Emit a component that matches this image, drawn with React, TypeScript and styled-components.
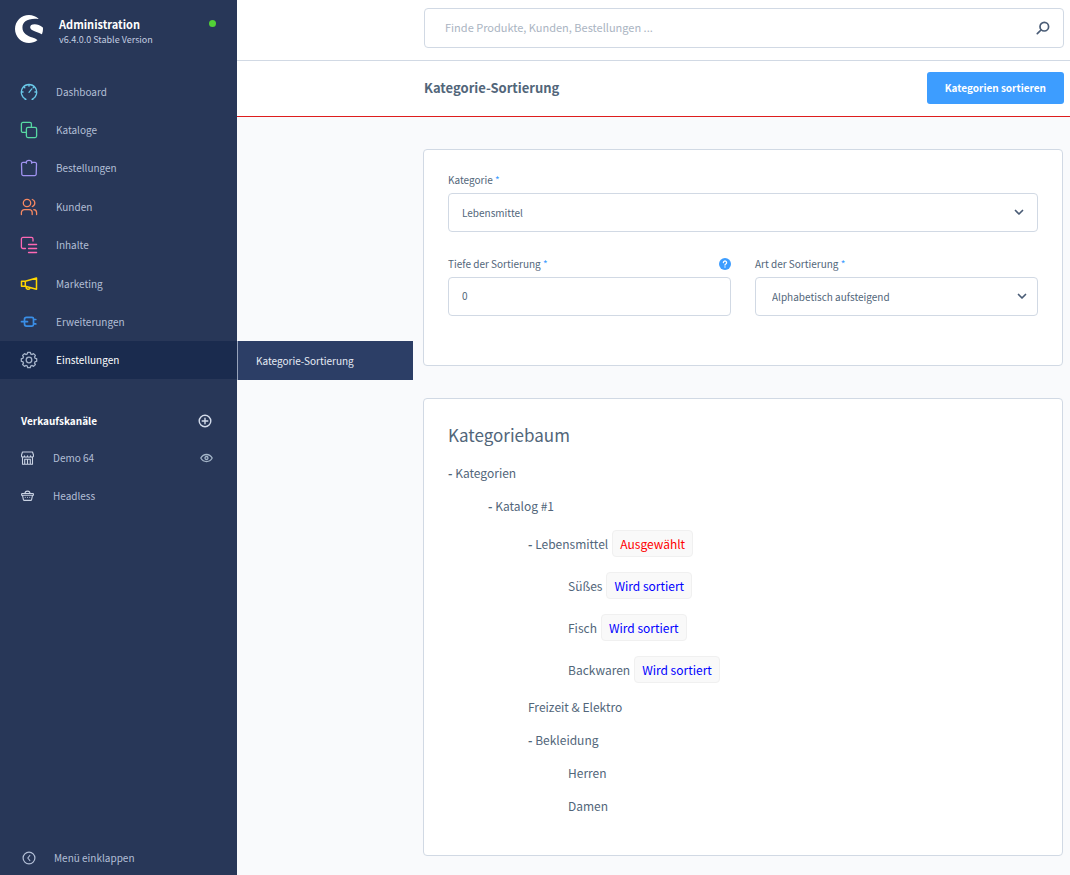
import React from 'react';
import styled, { createGlobalStyle } from 'styled-components';
import { SiShopware } from 'react-icons/si';

const c = {
  sidebar: '#283758',
  sidebarActive: '#1a2b4e',
  flyout: '#2c3e66',
  navText: '#b3bfd6',
  text: '#52667a',
  border: '#d1d9e4',
  page: '#f9fafc',
  blue: '#3d9dff',
};

const GlobalStyle = createGlobalStyle`
  *, *::before, *::after { box-sizing: border-box; }
  body {
    margin: 0;
    background: ${c.page};
    color: ${c.text};
    font-family: "Source Sans Pro", "Noto Sans CJK JP", "Noto Sans", sans-serif;
    font-size: 10px;
    line-height: 18px;
  }
  h1, h2, p, ul { margin: 0; padding: 0; }
  ul { list-style: none; }
  a { color: inherit; text-decoration: none; }
  svg { display: block; flex: none; }
  button, input, select { font: inherit; color: inherit; }
`;

const Layout = styled.div`
  display: flex;
  min-height: 100vh;
`;

const Sidebar = styled.aside`
  display: flex;
  flex-direction: column;
  flex: none;
  width: 237px;
  background: ${c.sidebar};
  color: ${c.navText};
`;

const Brand = styled.header`
  display: flex;
  align-items: flex-start;
  gap: 16px;
  height: 72px;
  padding: 15px 21px 0 15px;
  color: #fff;
`;

const BrandText = styled.div`
  flex: 1;
`;

const BrandName = styled.p`
  font-size: 11px;
  font-weight: 600;
`;

const Version = styled.p`
  font-size: 9px;
  line-height: 14px;
  color: #c3cde0;
`;

const StatusDot = styled.span`
  width: 7px;
  height: 7px;
  margin-top: 5px;
  border-radius: 50%;
  background: #52d136;
`;

const NavList = styled.ul`
  display: grid;
  grid-auto-rows: 1fr;
  height: 307px;
`;

const NavItem = styled.li`
  position: relative;
  display: grid;
`;

const NavLink = styled.a<{ $active?: boolean }>`
  display: flex;
  align-items: center;
  gap: 18px;
  padding: 1px 0 0 20px;
  background: ${(p) => (p.$active ? c.sidebarActive : 'transparent')};
  color: ${(p) => (p.$active ? '#fff' : 'inherit')};
`;

const Flyout = styled.a`
  position: absolute;
  top: 0;
  left: 100%;
  z-index: 1;
  display: flex;
  align-items: center;
  width: 176px;
  height: 39px;
  padding: 2px 0 0 18px;
  border-left: 1px solid #97a3ba;
  background: ${c.flyout};
  color: #e6ebf5;
`;

const SectionHead = styled.div`
  display: flex;
  align-items: center;
  justify-content: space-between;
  height: 38px;
  margin-top: 23px;
  padding: 0 25px 0 21px;
`;

const SectionTitle = styled.h2`
  font-size: 10px;
  font-weight: 700;
  color: #fff;
`;

const IconButton = styled.button`
  display: flex;
  padding: 0;
  border: 0;
  background: none;
  cursor: pointer;
`;

const Channel = styled.li`
  display: flex;
  align-items: center;
  justify-content: space-between;
  height: 38px;
  padding: 0 24px 2px 21px;
`;

const ChannelLink = styled.a`
  display: flex;
  align-items: center;
  gap: 19px;
`;

const Collapse = styled.button`
  display: flex;
  align-items: center;
  gap: 18px;
  height: 36px;
  margin-top: auto;
  padding: 2px 0 0 22px;
  border: 0;
  background: none;
  cursor: pointer;
`;

const Page = styled.div`
  flex: 1;
  min-width: 0;
`;

const TopBar = styled.div`
  padding: 8px 6px 12px 187px;
  border-bottom: 1px solid ${c.border};
  background: #fff;
`;

const SearchBox = styled.form`
  display: flex;
  align-items: center;
  height: 40px;
  padding: 0 13px 0 20px;
  border: 1px solid ${c.border};
  border-radius: 4px;
  color: ${c.text};
`;

const SearchInput = styled.input`
  flex: 1;
  min-width: 0;
  padding: 0 0 2px;
  border: 0;
  outline: 0;
  background: none;
  font-size: 11px;
  &::placeholder { color: #aab4c2; opacity: 1; }
`;

const TitleBar = styled.div`
  display: flex;
  align-items: center;
  justify-content: space-between;
  height: 56px;
  padding: 0 6px 2px 187px;
  border-bottom: 1px solid #de1d1d;
  background: #fff;
`;

const PageTitle = styled.h1`
  font-size: 13px;
  font-weight: 600;
`;

const PrimaryButton = styled.button`
  height: 32px;
  padding: 0 18px;
  border: 0;
  border-radius: 3px;
  background: ${c.blue};
  color: #fff;
  font-weight: 600;
  cursor: pointer;
`;

const Content = styled.main`
  display: flex;
  flex-direction: column;
  gap: 32px;
  padding: 32px 7px 19px 186px;
`;

const Card = styled.section`
  padding: 22px 24px 49px;
  border: 1px solid ${c.border};
  border-radius: 4px;
  background: #fff;
`;

const TreeCard = styled(Card)`
  padding-bottom: 40px;
`;

const FieldGrid = styled.div`
  display: grid;
  grid-template-columns: 1fr 1fr;
  gap: 24px;
`;

const Field = styled.div<{ $wide?: boolean }>`
  grid-column: ${(p) => (p.$wide ? '1 / -1' : 'auto')};
`;

const FieldHead = styled.div`
  display: flex;
  align-items: center;
  justify-content: space-between;
  height: 21px;
  padding-bottom: 5px;
`;

const Required = styled.span`
  color: ${c.blue};
`;

const Control = styled.div`
  position: relative;
`;

const TextInput = styled.input`
  display: block;
  width: 100%;
  height: 39px;
  padding: 0 13px 2px;
  border: 1px solid ${c.border};
  border-radius: 4px;
  background: #fff;
`;

const Select = styled.select<{ $inset: number }>`
  display: block;
  width: 100%;
  height: 39px;
  padding: 0 36px 0 ${(p) => p.$inset}px;
  border: 1px solid ${c.border};
  border-radius: 4px;
  background: #fff;
  appearance: none;
`;

const Chevron = styled.span<{ $right: number }>`
  position: absolute;
  top: 15px;
  right: ${(p) => p.$right}px;
  pointer-events: none;
`;

const TreeTitle = styled.h2`
  margin-bottom: 15px;
  font-size: 17px;
  font-weight: 400;
  line-height: 28px;
`;

const TreeList = styled.ul<{ $nested?: boolean }>`
  display: flex;
  flex-direction: column;
  gap: 15px;
  margin-top: ${(p) => (p.$nested ? '15px' : '0')};
  padding-left: ${(p) => (p.$nested ? '40px' : '0')};
  font-size: 12px;
`;

const TreeRow = styled.div`
  display: flex;
  align-items: center;
  gap: 4px;
`;

const Dash = styled.b`
  font-weight: 700;
`;

const Badge = styled.span<{ $tone: string }>`
  padding: 4px 7px;
  border: 1px solid #f0f0f0;
  border-radius: 4px;
  background: #f9f9f9;
  color: ${(p) => p.$tone};
  line-height: 17px;
`;

type IconProps = { color?: string; w?: number; h?: number; sw?: number; children: React.ReactNode };

const Icon = ({ color = 'currentColor', w = 18, h = 18, sw = 1.3, children }: IconProps) => (
  <svg width={w} height={h} viewBox={`0 0 ${w} ${h}`} fill="none" stroke={color} strokeWidth={sw} strokeLinecap="round" strokeLinejoin="round" aria-hidden="true">
    {children}
  </svg>
);

const gear = (() => {
  const pts: string[] = [];
  for (let i = 0; i < 8; i++) {
    [[-15, 6.3], [-10, 7.8], [10, 7.8], [15, 6.3]].forEach(([d, r]) => {
      const a = ((i * 45 + d) * Math.PI) / 180;
      pts.push(`${(9 + r * Math.cos(a)).toFixed(2)} ${(9 + r * Math.sin(a)).toFixed(2)}`);
    });
  }
  return `M${pts.join('L')}Z`;
})();

const nav = [
  { label: 'Dashboard', icon: <Icon color="#6ac8e8"><path d="M6 16.3A7.700 7.700 0 1 1 12 16.300M6 16.300H5M12 16.300h1M9 1.500v1.700M1.400 9h1.700M16.600 9h-1.700M3.600 3.600l1.200 1.200M14.400 3.600l-1.200 1.200M9 9.300l2.800-3.400" /></Icon> },
  { label: 'Kataloge', icon: <Icon color="#57d9a3"><path d="M6.400 11.400H2.900a1.500 1.500 0 0 1-1.500-1.500v-7a1.500 1.500 0 0 1 1.500-1.500h7a1.500 1.500 0 0 1 1.500 1.500v3.500" /><rect x="6.400" y="6.400" width="10.200" height="10.200" rx="1.500" /></Icon> },
  { label: 'Bestellungen', icon: <Icon color="#a092f0"><path d="M6 3.400H3a1.500 1.500 0 0 0-1.500 1.600l.3 10A1.500 1.500 0 0 0 3.300 16.600h11.400a1.500 1.500 0 0 0 1.500-1.600l.3-10A1.500 1.500 0 0 0 15 3.400h-3M6.300 4.300V3.400a2.700 2 0 0 1 5.400 0v.9" /></Icon> },
  { label: 'Kunden', icon: <Icon color="#f88962"><circle cx="7" cy="5" r="3.700" /><path d="M1.400 16.600v-2a3 3 0 0 1 3-3h4.800a3 3 0 0 1 3 3v2M12.300 1.500a3.700 3.700 0 0 1 0 7M13.800 11.700a3 3 0 0 1 2.800 3v1.900" /></Icon> },
  { label: 'Inhalte', icon: <Icon color="#ff68b4"><path d="M5.500 12.500H2.900a1.500 1.500 0 0 1-1.500-1.500V2.900a1.500 1.500 0 0 1 1.500-1.500h8.600a1.500 1.500 0 0 1 1.500 1.500v2.200M8.500 8.500h8.100M8.500 12.500h8.100M8.500 16.500h8.100" /></Icon> },
  { label: 'Marketing', icon: <Icon color="#ffd700" sw={1.500}><path d="M1.500 6.200h3.800L16.500 3v11.300L5.300 11.200H1.500zM5.300 6.200v5M6 11.500v.6a2.100 2.100 0 0 0 4.100.7" /></Icon> },
  { label: 'Erweiterungen', icon: <Icon color="#3a8ee6" sw={1.700}><path d="M1.500 8.700h6M6.500 4.300h5.500a1.500 1.500 0 0 1 1.500 1.500v5.800a1.500 1.500 0 0 1-1.500 1.500H6.500a2 2 0 0 1-2-2V6.300a2 2 0 0 1 2-2zM13.500 6.500h2.300M13.500 10.900h2.300" /></Icon> },
  { label: 'Einstellungen', icon: <Icon color="#a4b2c8"><path d={gear} /><circle cx="9" cy="9" r="2.800" /></Icon>, active: true },
];

const ChevronIcon = () => <Icon w={10} h={8} sw={1.700} color="#4a5c76"><path d="M1.500 2.500L5 6 8.500 2.500" /></Icon>;

type Node = { name: string; badge?: 'selected' | 'sorted'; children?: Node[] };

const tree: Node[] = [
  { name: 'Kategorien', children: [
    { name: 'Katalog #1', children: [
      { name: 'Lebensmittel', badge: 'selected', children: [
        { name: 'Süßes', badge: 'sorted' },
        { name: 'Fisch', badge: 'sorted' },
        { name: 'Backwaren', badge: 'sorted' },
      ] },
      { name: 'Freizeit & Elektro' },
      { name: 'Bekleidung', children: [{ name: 'Herren' }, { name: 'Damen' }] },
    ] },
  ] },
];

const Tree = ({ nodes, nested }: { nodes: Node[]; nested?: boolean }) => (
  <TreeList $nested={nested}>
    {nodes.map((n) => (
      <li key={n.name}>
        <TreeRow>
          <span>{n.children && <Dash>- </Dash>}{n.name}</span>
          {n.badge === 'selected' && <Badge $tone="#f00">Ausgewählt</Badge>}
          {n.badge === 'sorted' && <Badge $tone="#00f">Wird sortiert</Badge>}
        </TreeRow>
        {n.children && <Tree nodes={n.children} nested />}
      </li>
    ))}
  </TreeList>
);

export default function App() {
  return (
    <>
      <GlobalStyle />
      <Layout>
        <Sidebar>
          <Brand>
            <SiShopware size={28} aria-hidden="true" />
            <BrandText>
              <BrandName>Administration</BrandName>
              <Version>v6.4.0.0 Stable Version</Version>
            </BrandText>
            <StatusDot />
          </Brand>
          <nav>
            <NavList>
              {nav.map((n) => (
                <NavItem key={n.label}>
                  <NavLink href="#" $active={n.active}>{n.icon}{n.label}</NavLink>
                  {n.active && <Flyout href="#">Kategorie-Sortierung</Flyout>}
                </NavItem>
              ))}
            </NavList>
          </nav>
          <SectionHead>
            <SectionTitle>Verkaufskanäle</SectionTitle>
            <IconButton type="button" aria-label="Verkaufskanal hinzufügen">
              <Icon w={14} h={14} sw={1.400} color="#d3dbea"><circle cx="7" cy="7" r="5.800" /><path d="M7 4.200v5.600M4.200 7h5.600" /></Icon>
            </IconButton>
          </SectionHead>
          <ul>
            <Channel>
              <ChannelLink href="#">
                <Icon w={13} h={14} sw={1.100} color="#c9d2e3"><path d="M1.500 1h10l1 3v.5a1.500 1.500 0 0 1-3 .3 1.500 1.500 0 0 1-3 0 1.500 1.500 0 0 1-3 0 1.500 1.500 0 0 1-3-.3V4zM1.500 6.500v6.700h10V6.500M3.700 13V8.300h5.600V13M6.500 8.300V13" /></Icon>
                Demo 64
              </ChannelLink>
              <IconButton type="button" aria-label="Verkaufskanal ansehen">
                <Icon w={13} h={10} sw={1.300} color="#a4b5c8"><path d="M.800 5C3.500.300 9.500.300 12.200 5 9.500 9.700 3.500 9.700.800 5z" /><circle cx="6.500" cy="5" r="1.500" /></Icon>
              </IconButton>
            </Channel>
            <Channel>
              <ChannelLink href="#">
                <Icon w={13} h={12} sw={1.100} color="#c9d2e3"><path d="M1.200 3.500h10.600a.6.600 0 0 1 .6.600v1.200H.600V4.100a.6.600 0 0 1 .6-.6zM1.500 5.300l.9 4.300a1 1 0 0 0 1 .8h6.200a1 1 0 0 0 1-.8l.9-4.300M4 3.500a2.500 2.400 0 0 1 5 0M4.300 7.200v.1M6.500 7.200v.1M8.700 7.200v.1" /></Icon>
                Headless
              </ChannelLink>
            </Channel>
          </ul>
          <Collapse type="button">
            <Icon w={14} h={14} sw={1.200}><circle cx="7" cy="7" r="5.900" /><path d="M7.800 4.500L5.800 7l2 2.500" /></Icon>
            Menü einklappen
          </Collapse>
        </Sidebar>
        <Page>
          <TopBar>
            <SearchBox role="search">
              <SearchInput type="search" aria-label="Suche" placeholder="Finde Produkte, Kunden, Bestellungen ..." />
              <IconButton type="button" aria-label="Suchen">
                <Icon w={14} h={14} sw={1.700} color="#4a5c76"><circle cx="8.300" cy="5.700" r="4.300" /><path d="M5 9l-3.700 3.700" /></Icon>
              </IconButton>
            </SearchBox>
          </TopBar>
          <TitleBar>
            <PageTitle>Kategorie-Sortierung</PageTitle>
            <PrimaryButton type="button">Kategorien sortieren</PrimaryButton>
          </TitleBar>
          <Content>
            <Card>
              <FieldGrid>
                <Field $wide>
                  <FieldHead><label htmlFor="category">Kategorie <Required>*</Required></label></FieldHead>
                  <Control>
                    <Select id="category" $inset={13}><option>Lebensmittel</option></Select>
                    <Chevron $right={14}><ChevronIcon /></Chevron>
                  </Control>
                </Field>
                <Field>
                  <FieldHead>
                    <label htmlFor="depth">Tiefe der Sortierung <Required>*</Required></label>
                    <IconButton type="button" aria-label="Hilfe">
                      <svg width="12" height="12" viewBox="0 0 12 12" aria-hidden="true">
                        <circle cx="6" cy="6" r="6" fill={c.blue} />
                        <path d="M4.400 4.600a1.600 1.600 0 1 1 2.400 1.400c-.6.3-.8.5-.8 1.100M6 8.800v.2" fill="none" stroke="#fff" strokeWidth="1.300" strokeLinecap="round" />
                      </svg>
                    </IconButton>
                  </FieldHead>
                  <TextInput id="depth" type="text" inputMode="numeric" defaultValue="0" />
                </Field>
                <Field>
                  <FieldHead><label htmlFor="order">Art der Sortierung <Required>*</Required></label></FieldHead>
                  <Control>
                    <Select id="order" $inset={16}><option>Alphabetisch aufsteigend</option></Select>
                    <Chevron $right={11}><ChevronIcon /></Chevron>
                  </Control>
                </Field>
              </FieldGrid>
            </Card>
            <TreeCard>
              <TreeTitle>Kategoriebaum</TreeTitle>
              <Tree nodes={tree} />
            </TreeCard>
          </Content>
        </Page>
      </Layout>
    </>
  );
}
